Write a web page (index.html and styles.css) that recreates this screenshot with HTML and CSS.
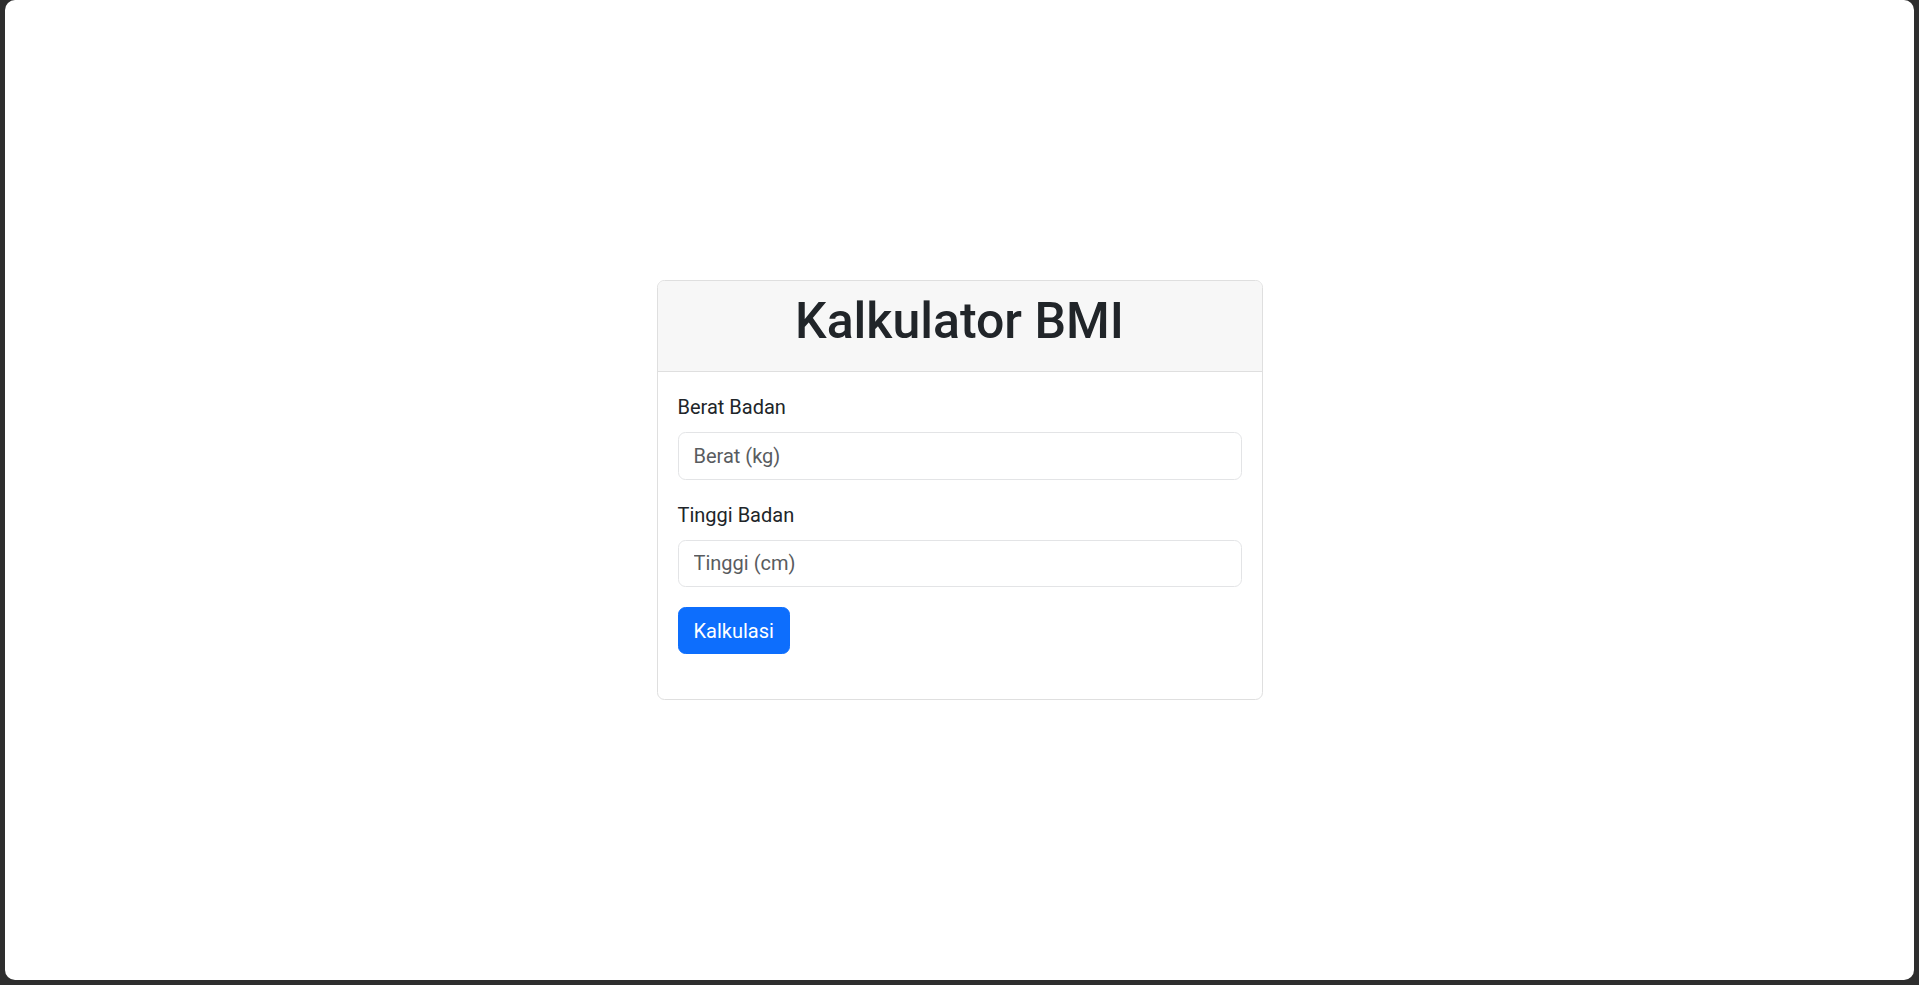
FILE: index.html
```html
<!DOCTYPE html>
<html lang="id">
<head>
<meta charset="utf-8">
<title>Kalkulator BMI</title>
<link rel="stylesheet" href="styles.css">
</head>
<body>
<div class="window">
  <div class="card">
    <div class="card-header">
      <h1 class="title">Kalkulator BMI</h1>
    </div>
    <div class="card-body">
      <form class="form">
        <div class="field">
          <label class="form-label" for="berat">Berat Badan</label>
          <input class="form-control" id="berat" type="number" placeholder="Berat (kg)">
        </div>
        <div class="field">
          <label class="form-label" for="tinggi">Tinggi Badan</label>
          <input class="form-control" id="tinggi" type="number" placeholder="Tinggi (cm)">
        </div>
        <div class="actions">
          <button class="btn" type="button">Kalkulasi</button>
        </div>
      </form>
      <div class="result"></div>
    </div>
  </div>
</div>
</body>
</html>
```

FILE: styles.css
```css
* { box-sizing: border-box; }

html, body {
  margin: 0;
  padding: 0;
  height: 100%;
}

body {
  background: #2e2e2e;
  font-family: Roboto, "Liberation Sans", Arial, sans-serif;
  color: #212529;
  font-size: 20px;
  line-height: 1.5;
  padding: 0 5px 5px 5px;
}

.window {
  background: #ffffff;
  height: 980px;
  border-radius: 10px;
  display: flex;
  align-items: center;
  justify-content: center;
}

.card {
  width: 606px;
  border: 1px solid #dfdfdf;
  border-radius: 7.5px;
  background: #ffffff;
  display: flex;
  flex-direction: column;
  overflow: hidden;
}

.card-header {
  background: #f7f7f7;
  border-bottom: 1px solid #dfdfdf;
  padding: 10px 20px;
}

.title {
  margin: 0 0 10px 0;
  font-size: 50px;
  font-weight: 500;
  line-height: 1.2;
  text-align: center;
  color: #212529;
}

.card-body {
  padding: 20px 20px 20px 20px;
}

.form {
  display: flex;
  flex-direction: column;
  gap: 20px;
}

.field {
  display: flex;
  flex-direction: column;
}

.form-label {
  margin-bottom: 10px;
  font-size: 20px;
  line-height: 30px;
  color: #212529;
}

.form-control {
  display: block;
  width: 100%;
  height: 47.5px;
  padding: 7.5px 15px;
  font-family: inherit;
  font-size: 20px;
  line-height: 30px;
  color: #212529;
  background: #ffffff;
  border: 1px solid #e3e4e6;
  border-radius: 7.5px;
  appearance: none;
  -moz-appearance: textfield;
}

.form-control::-webkit-outer-spin-button,
.form-control::-webkit-inner-spin-button {
  -webkit-appearance: none;
  margin: 0;
}

.form-control::placeholder {
  color: #595c5f;
  opacity: 1;
}

.actions {
  display: flex;
}

.btn {
  font-family: inherit;
  font-size: 20px;
  line-height: 30px;
  padding: 7.5px 15px;
  color: #ffffff;
  background: #0d6efd;
  border: 1px solid #0d6efd;
  border-radius: 7.5px;
  cursor: pointer;
}

.result {
  height: 25px;
}
```
